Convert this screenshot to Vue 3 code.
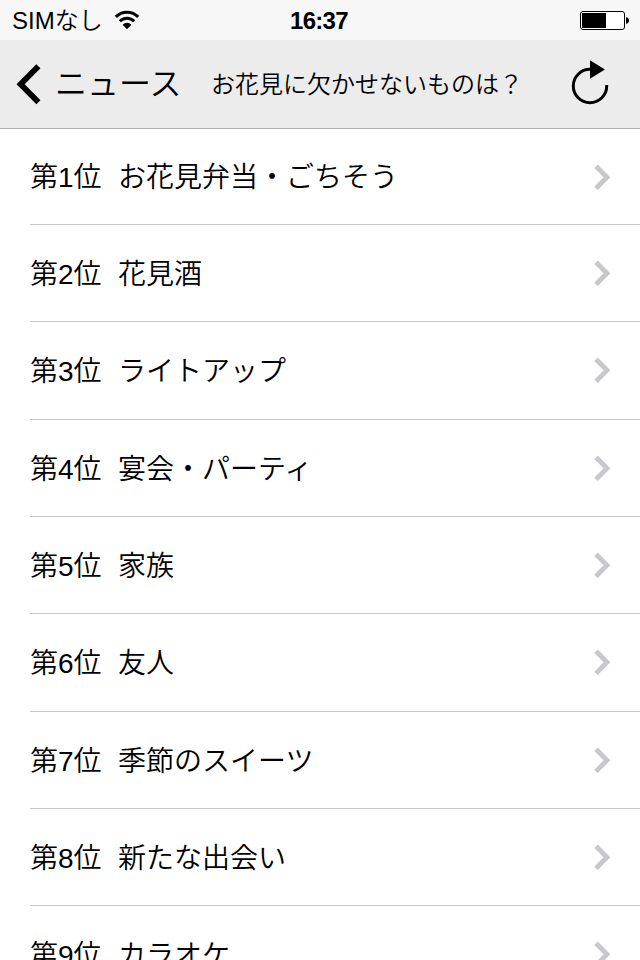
<template>
  <div class="screen">
    <div class="status-bar">
      <div class="carrier">
        <span>SIMなし</span>
        <svg class="wifi" width="26" height="20" viewBox="0 0 26 20">
          <path d="M1.8 6.9a15.6 15.6 0 0 1 22.4 0" fill="none" stroke="#000" stroke-width="3" />
          <path d="M5.8 11.3a10 10 0 0 1 14.4 0" fill="none" stroke="#000" stroke-width="3" />
          <path d="M8.6 14.7a6.2 6.2 0 0 1 8.8 0L13 19.2z" />
        </svg>
      </div>
      <div class="time">16:37</div>
      <svg class="battery" width="49" height="19" viewBox="0 0 49 19">
        <rect x="0.5" y="0.5" width="44" height="18" rx="2.5" fill="#fff" stroke="#000" />
        <rect x="2" y="2" width="24" height="15" />
        <path d="M46 6.2c2 0 3 1.4 3 3.3s-1 3.3-3 3.3z" />
      </svg>
    </div>

    <div class="nav-bar">
      <button class="back">
        <svg width="25" height="42" viewBox="0 0 25 42">
          <path d="M22.4 3.2L4.6 21.2L22.4 39.2" fill="none" stroke="#000" stroke-width="5.8" />
        </svg>
        <span>ニュース</span>
      </button>
      <h1>{{ title }}</h1>
      <button class="reload">
        <svg width="38" height="46" viewBox="0 0 38 46">
          <path d="M19 10.3a16.7 16.7 0 1 0 16.7 16.7v-1" fill="none" stroke="#000" stroke-width="3" />
          <path d="M19 1.2v18.6l14.9-9.3z" />
        </svg>
      </button>
    </div>

    <ul class="ranking">
      <li v-for="(item, index) in items" :key="index">
        <span class="label"><span class="rank">第{{ index + 1 }}位</span>{{ item }}</span>
        <svg class="arrow" width="18" height="26" viewBox="0 0 18 26">
          <path d="M2 2.2L13 13.3L2 24.4" fill="none" stroke="#c7c7cc" stroke-width="4.8" />
        </svg>
      </li>
    </ul>
  </div>
</template>

<script setup>
import { ref } from 'vue'

const title = ref('お花見に欠かせないものは？')

const items = ref([
  'お花見弁当・ごちそう',
  '花見酒',
  'ライトアップ',
  '宴会・パーティ',
  '家族',
  '友人',
  '季節のスイーツ',
  '新たな出会い',
  'カラオケ',
])
</script>

<style>
body {
  margin: 0;
  background: #fff;
}
</style>

<style scoped>
.screen {
  width: 640px;
  height: 960px;
  overflow: hidden;
  background: #fff;
  color: #000;
  font-family: "Liberation Sans", "Noto Sans CJK JP", sans-serif;
  font-weight: 350;
}

.status-bar {
  display: flex;
  align-items: center;
  height: 40px;
  padding: 0 11px 0 12px;
  background: #f7f7f7;
  font-size: 24px;
  line-height: 40px;
}

.carrier,
.battery {
  flex: none;
}

.carrier {
  display: flex;
  align-items: center;
  width: 278px;
}

.carrier span,
.time {
  padding-top: 2px;
  line-height: 38px;
}

.wifi {
  margin-left: 11px;
}

.time {
  flex: 1;
  font-weight: bold;
  letter-spacing: -0.7px;
}

.nav-bar {
  display: flex;
  align-items: center;
  box-sizing: border-box;
  height: 89px;
  padding: 0 31px 0 16px;
  background: #ececec;
  border-bottom: 1px solid #b2b2b2;
}

button {
  display: flex;
  align-items: center;
  padding: 0;
  border: none;
  background: none;
  color: #000;
  font: inherit;
}

.back {
  width: 195px;
  font-size: 32px;
  line-height: 88px;
}

.back span {
  margin-left: 14px;
}

h1 {
  flex: 1;
  margin: 0;
  padding-top: 2px;
  font-size: 24px;
  font-weight: 350;
  line-height: 86px;
  white-space: nowrap;
}

.reload {
  padding-bottom: 4px;
}

.ranking {
  margin: 0;
  padding: 0 0 0 30px;
  list-style: none;
}

.ranking li {
  display: flex;
  align-items: center;
  justify-content: space-between;
  box-sizing: border-box;
  height: calc(292px / 3);
  padding-right: 28px;
  border-bottom: 1px solid #c8c7cc;
  font-size: 28px;
}

.ranking li:first-child {
  height: 96px;
}

.label {
  padding-bottom: 2px;
}

.ranking li:first-child .label {
  padding-bottom: 4px;
}

.rank {
  margin-right: 16.5px;
}
</style>
